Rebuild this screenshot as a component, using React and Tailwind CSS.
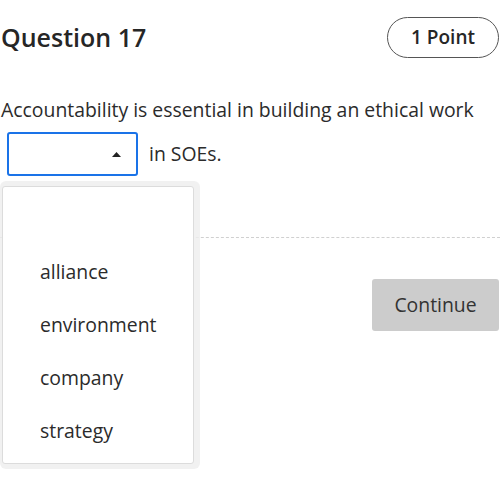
import React from 'react';

const options = ['', 'alliance', 'environment', 'company', 'strategy'];

const App = () => {
  return (
    <div className="relative w-[500px] h-[490px] overflow-hidden bg-white font-['Open_Sans',sans-serif] text-[#2b2b2b]">
      {/* header */}
      <div className="mt-[17px] flex h-[41px] items-center justify-between pl-[1px] pr-[1px]">
        <h2 className="text-[25px] font-semibold leading-none text-[#262626]">Question 17</h2>
        <div className="flex h-[41px] w-[112px] items-center justify-center rounded-full border border-[#555] text-[19px] font-semibold text-[#262626]">
          1 Point
        </div>
      </div>

      {/* question text */}
      <p className="mt-[39px] pl-[1px] text-[19.4px] leading-[26px]">
        Accountability is essential in building an ethical work
      </p>
      <div className="mt-[9px] flex items-center">
        <div className="ml-[7px] flex h-[44px] w-[131px] items-center justify-end rounded-[3px] border-2 border-[#1a73e8] pr-[15px]">
          <svg width="9" height="5" viewBox="0 0 9 5">
            <path d="M0 5 L4.5 0 L9 5 Z" fill="#222" />
          </svg>
        </div>
        <span className="ml-[11px] text-[19.4px]">in SOEs.</span>
      </div>

      <div className="mt-[61px] border-t border-dashed border-[#d0d0d0]" />

      <div className="mt-[41px] flex justify-end pr-[1px]">
        <button className="h-[52px] w-[127px] rounded-[3px] bg-[#cccccc] text-[19.4px] text-[#333]">
          Continue
        </button>
      </div>

      {/* open dropdown list */}
      <div className="absolute left-0 top-[181px] h-[288px] w-[200px] rounded-md bg-[#eeeeee]/80 pb-[5px] pl-[2px] pr-[6px] pt-[5px]">
        <ul className="h-full rounded-[3px] border border-[#dcdcdc] bg-white py-[5px]">
          {options.map((opt, i) => (
            <li key={i} className="flex h-[53px] items-center pl-[37px] text-[19.4px]">
              {opt}
            </li>
          ))}
        </ul>
      </div>
    </div>
  );
};

export default App;
